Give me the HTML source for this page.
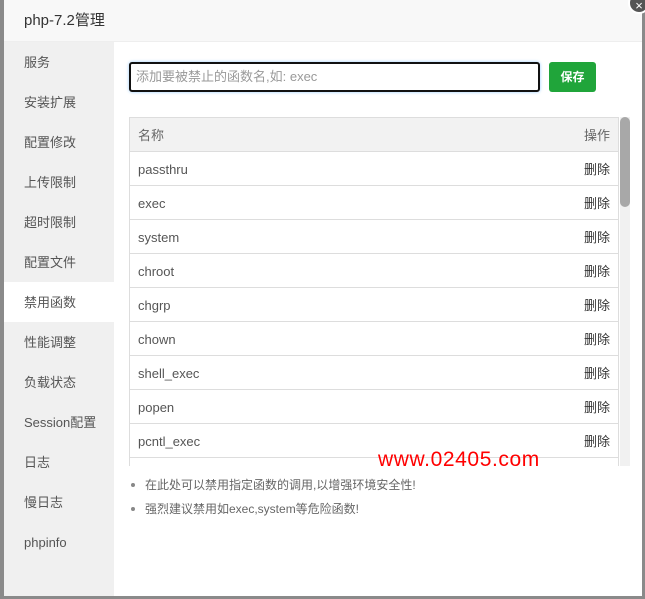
<!DOCTYPE html>
<html><head><meta charset="utf-8"><style>
*{margin:0;padding:0;box-sizing:border-box}
body{width:645px;height:599px;background:#8a8a8a;font-family:"Liberation Sans","Noto Sans CJK SC",sans-serif;position:relative;overflow:hidden}
.dlg{position:absolute;left:4px;top:0;width:638px;height:596px;background:#fff}
.hd{height:42px;background:#f8f8f8;border-bottom:1px solid #eee;padding-left:20px;line-height:42px;font-size:15px;color:#333}
.side{position:absolute;left:0;top:42px;width:110px;bottom:0;background:#f0f0f0}
.side div{height:40px;line-height:41px;padding-left:20px;font-size:13px;color:#555}
.side .on{background:#fff}
.close{position:absolute;left:628px;top:-8px;width:22px;height:22px;border-radius:50%;background:#555;border:2px solid #fff;color:#fff;font-size:13px;line-height:24px;text-align:center}
.inp{position:absolute;left:125px;top:62px;width:411px;height:30px;border:2px solid #111;border-radius:3px;box-shadow:0 0 3px #9cf;font-size:13px;color:#999;line-height:26px;padding-left:5px}
.btn{position:absolute;left:545px;top:62px;width:47px;height:30px;background:#20a53a;border-radius:3px;color:#fff;font-size:12px;font-weight:bold;text-align:center;line-height:30px}
.tbl{position:absolute;left:125px;top:117px;width:490px;height:349px;overflow:hidden;border:1px solid #ddd;border-bottom:none}
.row{height:34px;border-bottom:1px solid #ddd;font-size:13px;color:#555;line-height:35px;padding:0 8px;display:flex;justify-content:space-between}
.row.h{background:#f2f2f2;color:#666}
.row span:last-child{color:#333}
.sb{position:absolute;left:616px;top:117px;width:10px;height:349px;background:#f1f1f1}
.sb i{display:block;width:10px;height:90px;background:#a8a8a8;border-radius:5px}
.tips{position:absolute;left:125px;top:477px;font-size:12px;color:#666}
.tips div{height:24px;line-height:16px;position:relative;padding-left:16px}
.tips div:before{content:"";position:absolute;left:2px;top:6px;width:4px;height:4px;border-radius:50%;background:#888}
.wm{position:absolute;left:378px;top:448px;font-size:21px;letter-spacing:0.6px;color:#f00;font-family:"Liberation Sans",sans-serif}
</style></head><body>
<div class="dlg">
<div class="hd">php-7.2管理</div>
<div class="side">
<div>服务</div><div>安装扩展</div><div>配置修改</div><div>上传限制</div><div>超时限制</div><div>配置文件</div><div class="on">禁用函数</div><div>性能调整</div><div>负载状态</div><div>Session配置</div><div>日志</div><div>慢日志</div><div>phpinfo</div>
</div>
<div class="inp">添加要被禁止的函数名,如: exec</div>
<div class="btn">保存</div>
<div class="tbl">
<div class="row h"><span>名称</span><span style="color:#666">操作</span></div>
<div class="row"><span>passthru</span><span>删除</span></div>
<div class="row"><span>exec</span><span>删除</span></div>
<div class="row"><span>system</span><span>删除</span></div>
<div class="row"><span>chroot</span><span>删除</span></div>
<div class="row"><span>chgrp</span><span>删除</span></div>
<div class="row"><span>chown</span><span>删除</span></div>
<div class="row"><span>shell_exec</span><span>删除</span></div>
<div class="row"><span>popen</span><span>删除</span></div>
<div class="row"><span>pcntl_exec</span><span>删除</span></div>
<div class="row"><span>ini_alter</span><span>删除</span></div>
</div>
<div class="sb"><i></i></div>
<div class="tips"><div>在此处可以禁用指定函数的调用,以增强环境安全性!</div><div>强烈建议禁用如exec,system等危险函数!</div></div>
</div>
<div class="wm">www.02405.com</div>
<div class="close">×</div>
</body></html>
